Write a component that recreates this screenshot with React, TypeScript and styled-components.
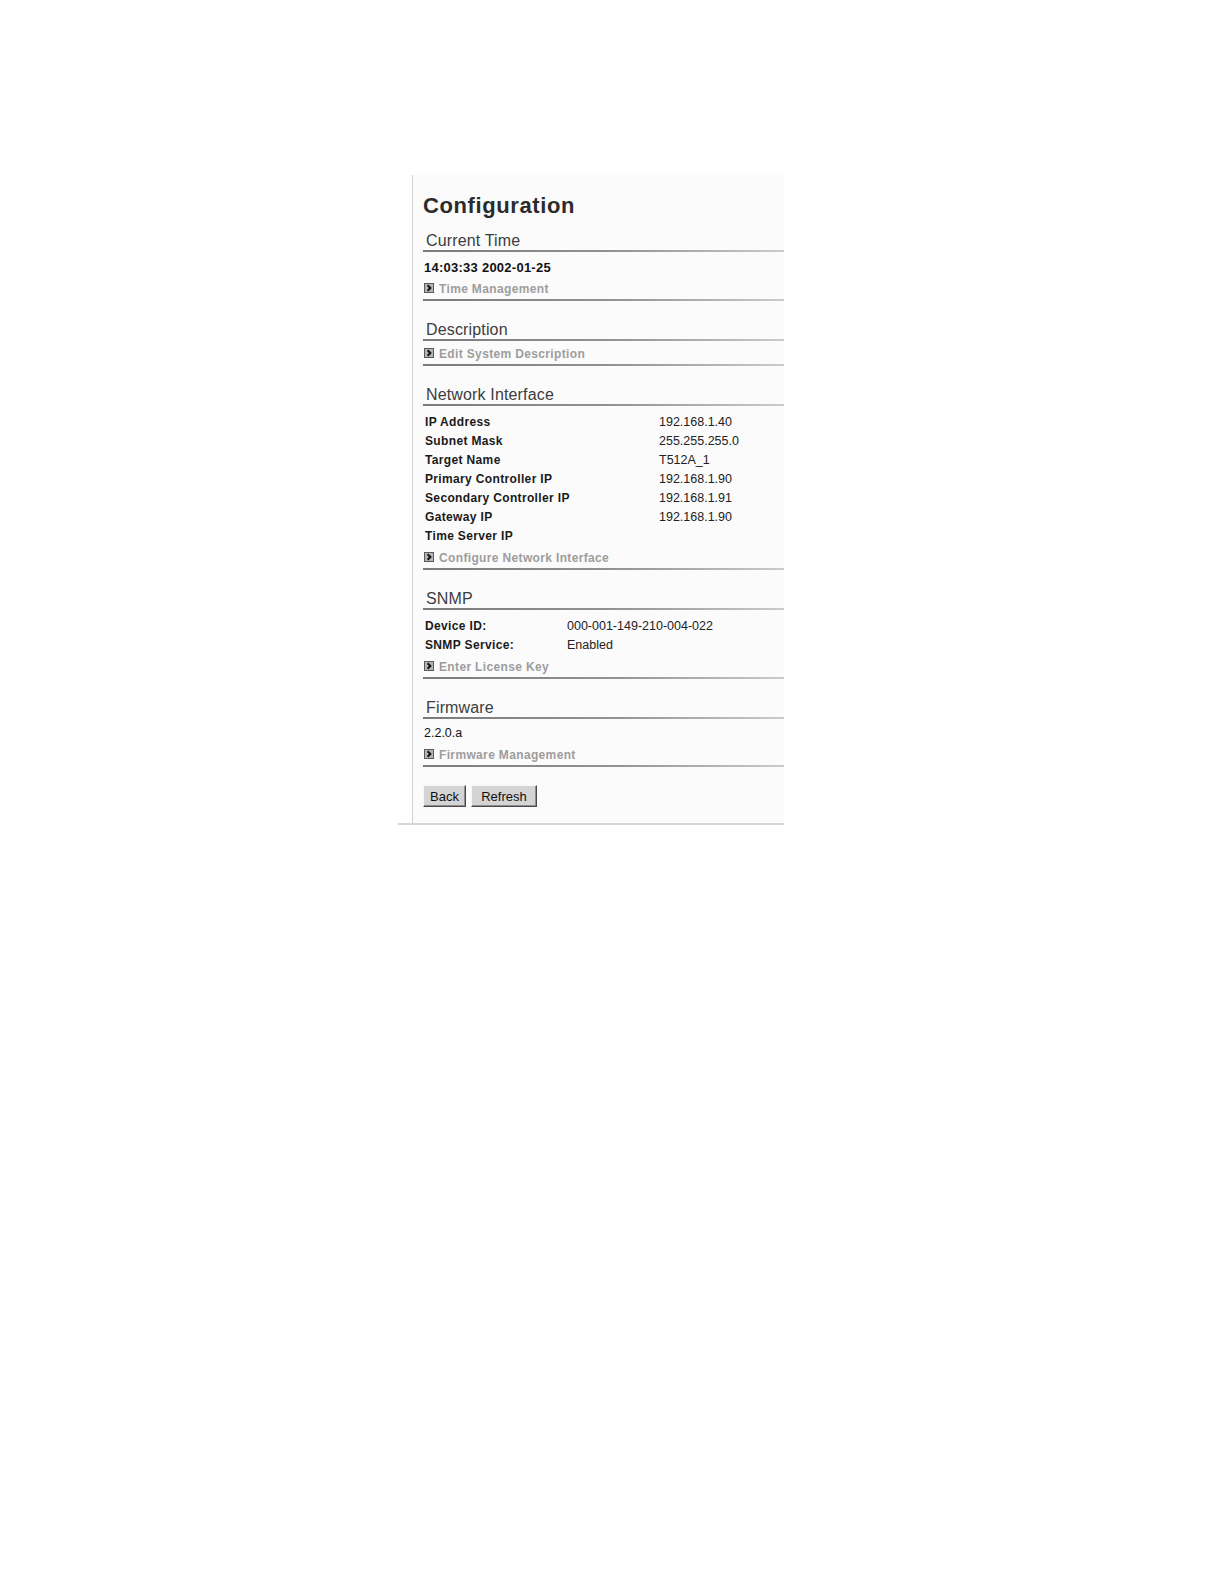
import React from 'react';
import styled, { createGlobalStyle } from 'styled-components';

const GlobalStyle = createGlobalStyle`
  body {
    margin: 0;
    background: #ffffff;
    font-family: "Liberation Sans", Arial, sans-serif;
  }
`;

const rule = `
  border-bottom: 2px solid transparent;
  border-image: linear-gradient(90deg, #7a7a7a 0%, #949494 55%, #cbcbcb 100%) 1;
`;

const Page = styled.div`
  padding: 175px 0 0 398px;
`;

const Frame = styled.div`
  width: 386px;
  border-bottom: 2px solid #d6d6d6;
`;

const Panel = styled.div`
  margin-left: 14px;
  border-left: 1px solid #d0d0d0;
  background: #fbfbfb;
  padding: 18px 0 16px 10px;
`;

const Title = styled.h1`
  margin: 0 0 12px;
  font-size: 22px;
  line-height: 26px;
  font-weight: bold;
  letter-spacing: 0.6px;
  color: #2b2b2b;
`;

const Section = styled.section`
  & + & {
    margin-top: 19px;
  }
`;

const SectionTitle = styled.h2`
  margin: 0;
  padding-left: 3px;
  font-size: 16px;
  line-height: 19px;
  font-weight: normal;
  letter-spacing: 0.15px;
  color: #3d3d3d;
  ${rule}
`;

const Body = styled.div`
  padding-top: 4px;
`;

const Fields = styled.div<{ $labelWidth: number }>`
  display: grid;
  grid-template-columns: ${p => p.$labelWidth}px 1fr;
  line-height: 19px;
  margin-top: 3px;
  padding-left: 2px;
  font-size: 12px;
`;

const Label = styled.div`
  font-weight: bold;
  letter-spacing: 0.35px;
  color: #1a1a1a;
`;

const Value = styled.div`
  font-size: 12.5px;
  color: #222;
`;

const Text = styled.div<{ $strong?: boolean }>`
  margin-top: ${p => (p.$strong ? 2 : 1)}px;
  padding-left: 1px;
  line-height: 19px;
  font-size: ${p => (p.$strong ? 13 : 12.5)}px;
  font-weight: ${p => (p.$strong ? 'bold' : 'normal')};
  letter-spacing: ${p => (p.$strong ? 0.25 : 0)}px;
  color: #111;
`;

const LinkRow = styled.a`
  display: flex;
  align-items: baseline;
  gap: 5px;
  padding-left: 1px;
  line-height: 19px;
  font-size: 12px;
  font-weight: bold;
  letter-spacing: 0.35px;
  color: #9d9d9d;
  text-decoration: none;
  cursor: pointer;
  ${rule}

  &:not(:first-child) {
    margin-top: 3px;
  }
`;

const ButtonBar = styled.div`
  display: flex;
  gap: 5px;
  margin-top: 18px;
`;

const Button = styled.button<{ $w: number }>`
  box-sizing: border-box;
  width: ${p => p.$w}px;
  height: 22px;
  padding: 0;
  background: #d4d4d4;
  border: 1px solid;
  border-color: #f6f6f6 #4a4a4a #4a4a4a #f6f6f6;
  box-shadow: inset -1px -1px 0 #8e8e8e;
  font-family: "Liberation Sans", Arial, sans-serif;
  font-size: 13px;
  color: #111;
`;

const Arrow = () => (
  <svg width="10" height="10" viewBox="0 0 10 10">
    <rect x="0.5" y="0.5" width="9" height="9" fill="#b4b4b4" stroke="#5a5a5a" />
    <polyline points="3.6,2.2 6.4,5 3.6,7.8" fill="none" stroke="#111" strokeWidth="2" />
  </svg>
);

const Link = ({ children }: { children: React.ReactNode }) => (
  <LinkRow>
    <Arrow />
    {children}
  </LinkRow>
);

const network: [string, string][] = [
  ['IP Address', '192.168.1.40'],
  ['Subnet Mask', '255.255.255.0'],
  ['Target Name', 'T512A_1'],
  ['Primary Controller IP', '192.168.1.90'],
  ['Secondary Controller IP', '192.168.1.91'],
  ['Gateway IP', '192.168.1.90'],
  ['Time Server IP', ''],
];

const snmp: [string, string][] = [
  ['Device ID:', '000-001-149-210-004-022'],
  ['SNMP Service:', 'Enabled'],
];

export default function App() {
  return (
    <Page>
      <GlobalStyle />
      <Frame>
        <Panel>
          <Title>Configuration</Title>

          <Section>
            <SectionTitle>Current Time</SectionTitle>
            <Body>
              <Text $strong>14:03:33 2002-01-25</Text>
              <Link>Time Management</Link>
            </Body>
          </Section>

          <Section>
            <SectionTitle>Description</SectionTitle>
            <Body>
              <Link>Edit System Description</Link>
            </Body>
          </Section>

          <Section>
            <SectionTitle>Network Interface</SectionTitle>
            <Body>
              <Fields $labelWidth={234}>
                {network.map(([k, v]) => (
                  <React.Fragment key={k}>
                    <Label>{k}</Label>
                    <Value>{v}</Value>
                  </React.Fragment>
                ))}
              </Fields>
              <Link>Configure Network Interface</Link>
            </Body>
          </Section>

          <Section>
            <SectionTitle>SNMP</SectionTitle>
            <Body>
              <Fields $labelWidth={142}>
                {snmp.map(([k, v]) => (
                  <React.Fragment key={k}>
                    <Label>{k}</Label>
                    <Value>{v}</Value>
                  </React.Fragment>
                ))}
              </Fields>
              <Link>Enter License Key</Link>
            </Body>
          </Section>

          <Section>
            <SectionTitle>Firmware</SectionTitle>
            <Body>
              <Text>2.2.0.a</Text>
              <Link>Firmware Management</Link>
            </Body>
          </Section>

          <ButtonBar>
            <Button $w={43}>Back</Button>
            <Button $w={66}>Refresh</Button>
          </ButtonBar>
        </Panel>
      </Frame>
    </Page>
  );
}
